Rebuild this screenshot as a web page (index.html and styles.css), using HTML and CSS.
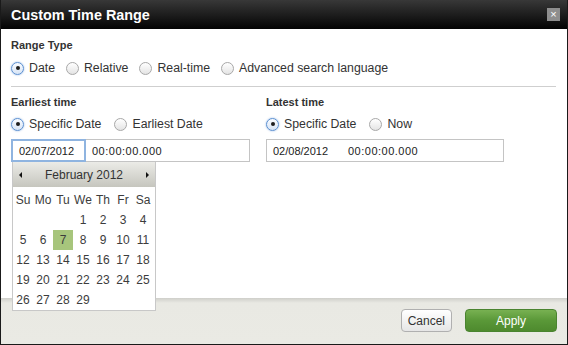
FILE: index.html
```html
<!DOCTYPE html>
<html lang="en">
<head>
  <meta charset="UTF-8" />
  <title>Custom Time Range</title>
  <link rel="stylesheet" href="styles.css">
</head>
<body>

  <div class="dialog">
    <!-- Title bar -->
    <div class="dialog-header">
      <h1>Custom Time Range</h1>
      <span class="close-btn">&times;</span>
    </div>

    <div class="dialog-body">
      <div class="field-label">Range Type</div>
      <div class="radio-row">
        <label class="radio checked"><span class="dot"></span>Date</label>
        <label class="radio"><span class="dot"></span>Relative</label>
        <label class="radio"><span class="dot"></span>Real-time</label>
        <label class="radio"><span class="dot"></span>Advanced search language</label>
      </div>

      <div class="divider"></div>

      <div class="columns">
        <div class="col">
          <div class="field-label">Earliest time</div>
          <div class="radio-row">
            <label class="radio checked"><span class="dot"></span>Specific Date</label>
            <label class="radio"><span class="dot"></span>Earliest Date</label>
          </div>
          <div class="date-input">
            <span class="date-part focused">02/07/2012</span>
            <span class="time-part">00:00:00.000</span>
          </div>

          <!-- Date picker popup -->
          <div class="calendar">
            <div class="cal-header">
              <span class="arrow prev"></span>
              <span class="cal-title">February 2012</span>
              <span class="arrow next"></span>
            </div>
            <div class="cal-grid">
              <span>Su</span><span>Mo</span><span>Tu</span><span>We</span><span>Th</span><span>Fr</span><span>Sa</span>
              <span></span><span></span><span></span><span>1</span><span>2</span><span>3</span><span>4</span>
              <span>5</span><span>6</span><span class="selected">7</span><span>8</span><span>9</span><span>10</span><span>11</span>
              <span>12</span><span>13</span><span>14</span><span>15</span><span>16</span><span>17</span><span>18</span>
              <span>19</span><span>20</span><span>21</span><span>22</span><span>23</span><span>24</span><span>25</span>
              <span>26</span><span>27</span><span>28</span><span>29</span>
            </div>
          </div>
        </div>

        <div class="col">
          <div class="field-label">Latest time</div>
          <div class="radio-row">
            <label class="radio checked"><span class="dot"></span>Specific Date</label>
            <label class="radio"><span class="dot"></span>Now</label>
          </div>
          <div class="date-input wide">
            <span class="date-part">02/08/2012</span>
            <span class="time-part">00:00:00.000</span>
          </div>
        </div>
      </div>
    </div>

    <div class="dialog-footer">
      <button class="btn">Cancel</button>
      <button class="btn btn-primary">Apply</button>
    </div>
  </div>

</body>
</html>
```

FILE: styles.css
```css
* {
  margin: 0;
  padding: 0;
  box-sizing: border-box;
}

body {
  font-family: 'Liberation Sans', Arial, sans-serif;
  font-size: 12px;
  color: #333;
  background: #fff;
}

.dialog {
  width: 568px;
  height: 345px;
  display: flex;
  flex-direction: column;
  border: 1px solid #1a1a1a;
  border-top: none;
}

/* Title bar */
.dialog-header {
  height: 29px;
  flex-shrink: 0;
  display: flex;
  align-items: center;
  justify-content: space-between;
  padding: 0 7px 0 10px;
  background: linear-gradient(#383838, #030303);
}

.dialog-header h1 {
  font-size: 14.4px;
  font-weight: bold;
  color: #fff;
}

.close-btn {
  width: 13px;
  height: 13px;
  background: #8e8e8e;
  color: #fff;
  font-size: 11px;
  line-height: 12px;
  text-align: center;
}

/* Body */
.dialog-body {
  flex: 1;
  padding: 9px 10px 0;
}

.field-label {
  font-size: 11px;
  font-weight: bold;
  line-height: 14px;
  color: #333;
}

.radio-row {
  display: flex;
  gap: 11px;
  margin-top: 8px;
  height: 16px;
  align-items: center;
  font-size: 12.3px;
}

.radio {
  display: flex;
  align-items: center;
  gap: 5px;
  color: #333;
}

.radio .dot {
  width: 13px;
  height: 13px;
  border-radius: 50%;
  border: 1px solid #a8a8a8;
  background: linear-gradient(#fff, #e4e4e4);
  position: relative;
}

.radio.checked .dot {
  border-color: #5b8fd0;
  box-shadow: 0 0 2px rgba(70, 130, 210, 0.6);
  background: linear-gradient(#fafcff, #d7e4f5);
}

.radio.checked .dot::after {
  content: '';
  position: absolute;
  left: 3.5px;
  top: 3.5px;
  width: 4px;
  height: 4px;
  border-radius: 50%;
  background: #1d1d1d;
}

.divider {
  height: 1px;
  background: #cfcfcf;
  margin: 10px 1px 8px 0;
}

.columns {
  display: flex;
}

.col {
  width: 255px;
  position: relative;
}

.col .radio-row {
  margin-top: 7px;
  gap: 13px;
}

/* Date / time input */
.date-input {
  display: flex;
  margin-top: 7px;
  height: 23px;
  width: 239px;
  border: 1px solid #c4c4c4;
  align-items: center;
  font-size: 11px;
  color: #222;
}

.date-input .date-part {
  width: 75px;
  padding-left: 6px;
}

.date-input .time-part {
  padding-left: 6px;
  letter-spacing: 0.5px;
}

.date-input .date-part.focused {
  height: 23px;
  margin: -1px 0 -1px -1px;
  border: 2px solid #8fb4e0;
  display: flex;
  align-items: center;
  padding-left: 6px;
}

.date-input.wide {
  width: 238px;
}

/* Calendar popup */
.calendar {
  position: absolute;
  left: 1px;
  top: 67px;
  width: 144px;
  height: 149px;
  background: #fff;
  border: 1px solid #c8c8c8;
  border-top: none;
  z-index: 2;
}

.cal-header {
  height: 25px;
  display: flex;
  align-items: center;
  justify-content: space-between;
  padding: 0 6px;
  background: linear-gradient(#ebebe7, #c6c6be);
}

.cal-title {
  font-size: 12px;
  color: #333;
}

.arrow {
  width: 0;
  height: 0;
  border-top: 3px solid transparent;
  border-bottom: 3px solid transparent;
}

.arrow.prev {
  border-right: 3px solid #111;
}

.arrow.next {
  border-left: 3px solid #111;
}

.cal-grid {
  display: grid;
  grid-template-columns: repeat(7, 20px);
  grid-auto-rows: 20px;
  padding: 3px 0 0 0;
}

.cal-grid span {
  display: flex;
  align-items: center;
  justify-content: center;
  font-size: 12px;
  color: #3c3c3c;
}

.cal-grid .selected {
  background: #a7c57c;
}

/* Footer */
.dialog-footer {
  height: 46px;
  flex-shrink: 0;
  display: flex;
  justify-content: flex-end;
  align-items: center;
  gap: 13px;
  padding: 0 10px 1px;
  background: linear-gradient(#cfcfca, #e9e9e3 5px, #eaeae4);
}

.btn {
  height: 23px;
  padding: 0 6px;
  font-family: 'Liberation Sans', Arial, sans-serif;
  font-size: 12px;
  color: #333;
  border: 1px solid #b0b0b0;
  border-radius: 4px;
  background: linear-gradient(#ffffff, #e6e6e6);
}

.btn-primary {
  width: 92px;
  color: #fff;
  border-color: #4a8430;
  background: linear-gradient(#78b152, #5a9838 50%, #4e8a2e);
}
```
